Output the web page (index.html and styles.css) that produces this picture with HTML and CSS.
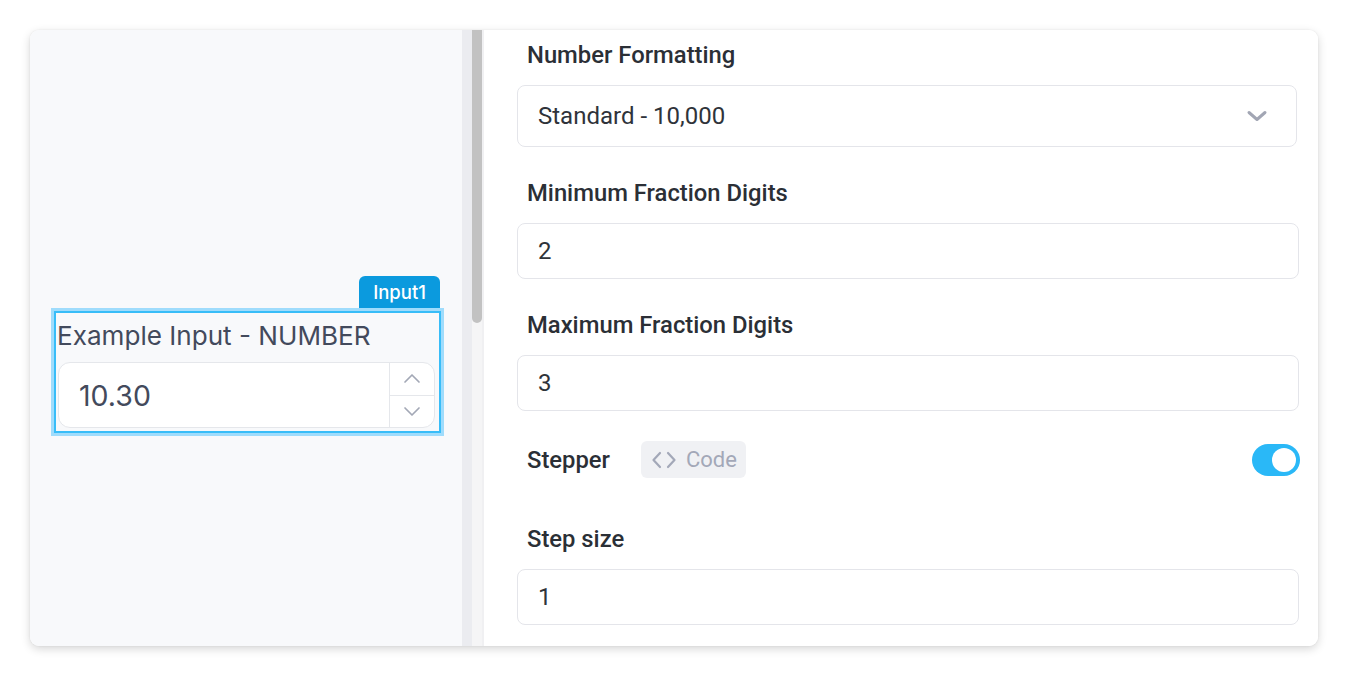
FILE: index.html
```html
<!DOCTYPE html>
<html>
<head>
<meta charset="utf-8">
<link rel="stylesheet" href="styles.css">
</head>
<body>
<div class="card">
  <div class="canvas">
    <div class="widget">
      <div class="badge">Input1</div>
      <div class="w-label">Example Input - NUMBER</div>
      <div class="num-input">
        <div class="num-value">10.30</div>
        <div class="stepper">
          <div class="step">
            <svg width="18" height="11" viewBox="0 0 18 11"><path d="M2 9 L9 2 L16 9" fill="none" stroke="#a3a8b6" stroke-width="1.7" stroke-linecap="round" stroke-linejoin="round"/></svg>
          </div>
          <div class="step">
            <svg width="18" height="11" viewBox="0 0 18 11"><path d="M2 2 L9 9 L16 2" fill="none" stroke="#a3a8b6" stroke-width="1.7" stroke-linecap="round" stroke-linejoin="round"/></svg>
          </div>
        </div>
      </div>
    </div>
  </div>
  <div class="scroll-track"><div class="scroll-thumb"></div></div>
  <div class="divider"></div>
  <div class="panel">
    <div class="field first">
      <div class="label">Number Formatting</div>
      <div class="box select">
        <span>Standard - 10,000</span>
        <svg width="22" height="12" viewBox="0 0 22 12"><path d="M3 2.5 L11 9.5 L19 2.5" fill="none" stroke="#a2a6b4" stroke-width="3" stroke-linecap="round" stroke-linejoin="round"/></svg>
      </div>
    </div>
    <div class="field">
      <div class="label">Minimum Fraction Digits</div>
      <div class="box">2</div>
    </div>
    <div class="field">
      <div class="label">Maximum Fraction Digits</div>
      <div class="box">3</div>
    </div>
    <div class="row">
      <div class="label inline">Stepper</div>
      <div class="code">
        <svg width="26" height="20" viewBox="0 0 26 20"><path d="M9 3 L2.5 10 L9 17 M17 3 L23.5 10 L17 17" fill="none" stroke="#a3a8b8" stroke-width="2.2" stroke-linecap="round" stroke-linejoin="round"/></svg>
        <span>Code</span>
      </div>
      <div class="toggle"><div class="knob"></div></div>
    </div>
    <div class="field last">
      <div class="label">Step size</div>
      <div class="box">1</div>
    </div>
  </div>
</div>
</body>
</html>
```
FILE: styles.css
```css
html, body {
  margin: 0;
  padding: 0;
  background: #ffffff;
}
body {
  width: 1348px;
  height: 676px;
  overflow: hidden;
  font-family: Roboto, "Liberation Sans", sans-serif;
}
.card {
  position: relative;
  margin: 30px 0 0 30px;
  width: 1288px;
  height: 616px;
  border-radius: 9px;
  background: #ffffff;
  box-shadow: 0 3px 10px rgba(0, 0, 0, 0.16), 0 0 2px rgba(0, 0, 0, 0.08);
  display: flex;
  overflow: hidden;
}
.canvas {
  position: relative;
  width: 432px;
  flex: none;
  background: #f8f9fb;
}
.scroll-track {
  width: 20px;
  flex: none;
  background: linear-gradient(to right, #ebecf0 0, #ebecf0 10px, #f5f5f6 10px);
  position: relative;
}
.scroll-thumb {
  position: absolute;
  left: 10px;
  top: 0;
  width: 10px;
  height: 293px;
  background: #c2c2c2;
  border-radius: 0 0 5px 5px;
}
.divider {
  width: 2px;
  flex: none;
  background: #f0f0f2;
}
.widget {
  position: absolute;
  left: 24px;
  top: 281px;
  width: 383px;
  height: 118px;
  border: 2px solid #38bdf8;
  box-shadow: 0 0 0 3px #9fdcfc;
  font-family: Inter, "Noto Sans", sans-serif;
}
.badge {
  position: absolute;
  right: -1px;
  top: -37px;
  width: 81px;
  height: 32px;
  border-radius: 6px 6px 0 0;
  background: #0b9ade;
  color: #ffffff;
  font-size: 18.5px;
  font-weight: 500;
  display: flex;
  align-items: center;
  justify-content: center;
}
.w-label {
  padding: 7px 0 0 1px;
  height: 40px;
  box-sizing: border-box;
  font-size: 26.1px;
  line-height: 32px;
  color: #434a5c;
}
.num-input {
  margin: 9px 0 0 2px;
  width: 377px;
  height: 66px;
  box-sizing: border-box;
  border: 1.5px solid #e5e7eb;
  border-radius: 12px;
  background: #ffffff;
  display: flex;
  overflow: hidden;
}
.num-value {
  flex: 1;
  padding-left: 20px;
  display: flex;
  align-items: center;
  font-size: 28.5px;
  color: #434a5c;
}
.stepper {
  width: 44px;
  border-left: 1.5px solid #e5e7eb;
  display: flex;
  flex-direction: column;
}
.step {
  flex: 1;
  display: flex;
  align-items: center;
  justify-content: center;
}
.step + .step {
  border-top: 1.5px solid #e5e7eb;
}
.panel {
  flex: 1;
  padding: 13px 19px 0 33px;
  background: #ffffff;
}
.label {
  font-size: 23.8px;
  font-weight: 500;
  color: #2b2f36;
  line-height: 24px;
  margin-bottom: 18px;
  padding-left: 10px;
}
.label.inline {
  margin-bottom: 0;
}
.field {
  margin-bottom: 34px;
}
.box {
  height: 56px;
  box-sizing: border-box;
  border: 1.5px solid #e4e5ea;
  border-radius: 8px;
  padding-left: 20px;
  display: flex;
  align-items: center;
  font-size: 24px;
  color: #2f333a;
}
.box.select {
  height: 62px;
  margin-right: 2px;
  justify-content: space-between;
  padding-right: 28px;
}
.row {
  display: flex;
  align-items: center;
  height: 37px;
  margin-top: -4px;
  margin-bottom: 49px;
}
.code {
  margin-left: 31px;
  height: 37px;
  width: 105px;
  box-sizing: border-box;
  background: #f0f1f4;
  border-radius: 6px;
  display: flex;
  align-items: center;
  padding-left: 10px;
  gap: 9px;
  color: #a3a8b8;
  font-size: 22px;
}
.toggle {
  margin-left: auto;
  margin-right: -1px;
  width: 48px;
  height: 32px;
  border-radius: 16px;
  background: #2ab8f7;
  position: relative;
}
.knob {
  position: absolute;
  right: 4px;
  top: 4px;
  width: 24px;
  height: 24px;
  border-radius: 50%;
  background: #ffffff;
}
```
